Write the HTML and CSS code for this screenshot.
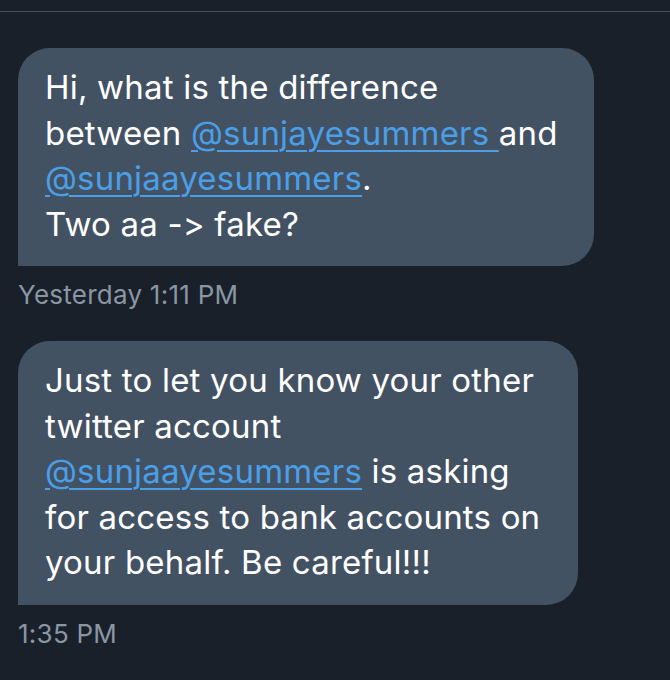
FILE: index.html
```html
<!DOCTYPE html>
<html>
<head>
<meta charset="utf-8">
<link rel="stylesheet" href="styles.css">
</head>
<body>
<div class="screen">
  <div class="divider"></div>
  <div class="thread">
    <div class="msg">
      <div class="bubble b1">Hi, what is the difference<br>between <a class="mention">@sunjayesummers </a>and<br><a class="mention">@sunjaayesummers</a>.<br>Two aa -&gt; fake?</div>
      <div class="time">Yesterday 1:11 PM</div>
    </div>
    <div class="msg">
      <div class="bubble b2">Just to let you know your other<br>twitter account<br><a class="mention">@sunjaayesummers</a> is asking<br>for access to bank accounts on<br>your behalf. Be careful!!!</div>
      <div class="time">1:35 PM</div>
    </div>
  </div>
</div>
</body>
</html>
```
FILE: styles.css
```css
html, body {
  margin: 0;
  padding: 0;
  background: #19202a;
}
.screen {
  width: 670px;
  height: 680px;
  overflow: hidden;
  background: #19202a;
  font-family: "Inter", "Liberation Sans", sans-serif;
}
.divider {
  margin-top: 11px;
  height: 1px;
  background: #4a515d;
}
.thread {
  display: flex;
  flex-direction: column;
  gap: 30px;
  padding: 36px 0 0 18px;
}
.msg {
  display: flex;
  flex-direction: column;
  align-items: flex-start;
  gap: 13px;
}
.bubble {
  background: #435263;
  color: #ffffff;
  font-size: 33px;
  line-height: 45.5px;
  letter-spacing: 0.2px;
  white-space: nowrap;
  border-radius: 32px 32px 32px 0;
  padding: 17px 36px 19px 27px;
}
.b2 {
  padding-right: 38px;
}
.mention {
  color: #4a9fe8;
  text-decoration: underline;
  text-decoration-thickness: 2px;
  text-underline-offset: 5px;
}
.time {
  color: #8a96a3;
  font-size: 26px;
  line-height: 32px;
  letter-spacing: 0.25px;
}
```
